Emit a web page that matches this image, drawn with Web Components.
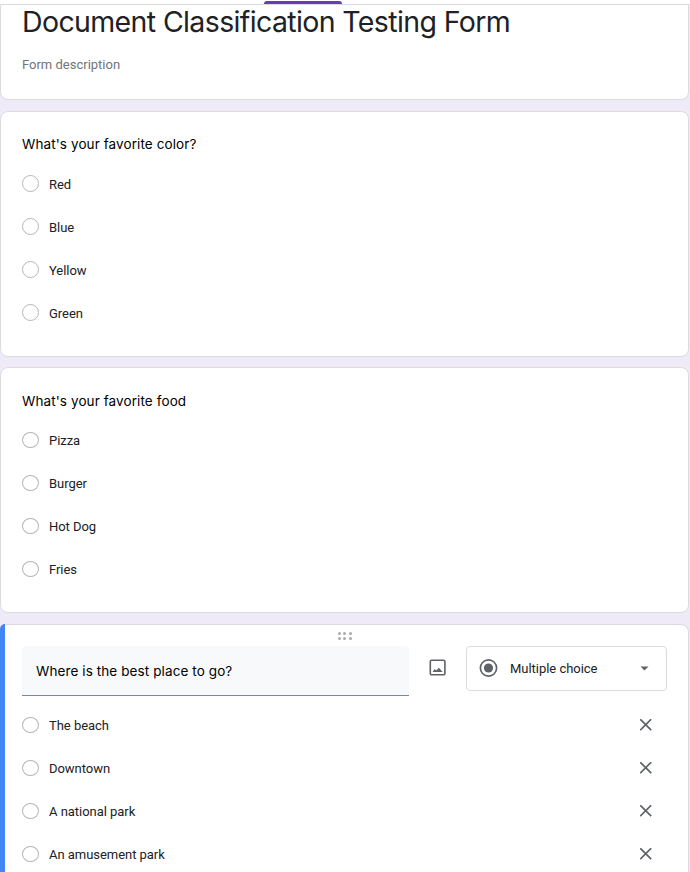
<!DOCTYPE html>
<html lang="en">
<head>
<meta charset="utf-8">
<title>Document Classification Testing Form</title>
<style>
html,body{margin:0;height:100%;overflow:hidden;background:#eeeaf7}
body{font-family:Roboto,"Liberation Sans",sans-serif;color:#202124;font-size:13px}
</style>
</head>
<body>
<form-page>
  <form-header title-text="Document Classification Testing Form">Form description</form-header>
  <form-question style="--title-top:20px;--title-gap:6px;--mb:10px;--dot-top:13px;--dot-height:17px">
    <span slot="title">What's your favorite color?</span>
    <form-option>Red</form-option><form-option>Blue</form-option><form-option>Yellow</form-option><form-option>Green</form-option>
  </form-question>
  <form-question style="--title-top:21px;--title-gap:5px;--mb:11px">
    <span slot="title">What's your favorite food</span>
    <form-option>Pizza</form-option><form-option>Burger</form-option><form-option>Hot Dog</form-option><form-option>Fries</form-option>
  </form-question>
  <form-editor>
    <span slot="title">Where is the best place to go?</span>
    <span slot="type">Multiple choice</span>
    <form-option removable>The beach</form-option><form-option removable>Downtown</form-option><form-option removable>A national park</form-option><form-option removable>An amusement park</form-option>
  </form-editor>
</form-page>
<script>
const define=(name,html,setup)=>customElements.define(name,class extends HTMLElement{
  constructor(){super();this.attachShadow({mode:'open'}).innerHTML=html}
  connectedCallback(){if(setup)setup(this)}
});
define('form-page',`<style>
:host{display:block;width:690px;height:872px;overflow:hidden}
.tabs{height:4px;background:#fff;border-bottom:1px solid #dadce0;position:relative}
.tabs i{position:absolute;left:264px;top:1px;width:78px;height:3px;background:#673ab7;border-radius:3px 3px 0 0}
</style><div class="tabs"><i></i></div><slot></slot>`);
define('form-header',`<style>
:host{display:block;box-sizing:border-box;width:689px;height:95px;margin-bottom:11px;background:#fff;border:1px solid #dadce0;border-top:0;border-radius:0 0 8px 8px;padding:0 21px}
h1{margin:0;font:400 28.5px/34px Inter,sans-serif;height:34px;letter-spacing:-.63px;white-space:nowrap}
p{margin:16px 0 0;line-height:20px;color:#70757a}
</style><h1></h1><p><slot></slot></p>`,e=>{e.shadowRoot.querySelector('h1').textContent=e.getAttribute('title-text')});
define('form-question',`<style>
:host{display:block;box-sizing:border-box;width:689px;height:246px;margin-bottom:var(--mb);background:#fff;border:1px solid #dadce0;border-radius:8px;padding:var(--title-top) 21px 0}
h2{margin:0 0 var(--title-gap);font:400 13.5px/24px Inter,sans-serif;letter-spacing:.1px;color:#000}
</style><h2><slot name="title"></slot></h2><slot></slot>`);
define('form-option',`<style>
:host{display:flex;height:43px;align-items:center;color:#202124}
i{box-sizing:border-box;align-self:flex-start;width:17px;height:var(--dot-height,16px);margin-top:var(--dot-top,14px);border:1px solid #b5b5b5;border-radius:50%;margin-right:10px}
span{flex:1;line-height:17px;padding-top:1px;letter-spacing:-.04px}
svg{display:none;width:12px;height:12px;margin-right:15px}
:host([removable]) svg{display:block}
</style><i></i><span><slot></slot></span><svg viewBox="0 0 12 12"><path d="M.2.2l11 11M11.2.2l-11 11" stroke="#5f6368" stroke-width="1.7"/></svg>`);
define('form-editor',`<style>
:host{display:block;position:relative;box-sizing:border-box;width:689px;height:260px;background:#fff;border:1px solid #dadce0;border-radius:8px;padding:0 21px}
.bar{position:absolute;left:-1px;top:-1px;bottom:0;width:5px;background:#4285f4;border-radius:8px 0 0 8px}
.grip{display:grid;grid-template-columns:repeat(3,3px);gap:2px;height:14px;padding-top:7px;justify-content:center;column-gap:2.5px;align-content:start}
.grip b{width:3px;height:3px;border-radius:50%;background:#aaa}
.row{display:flex;margin-bottom:7px;height:50px;align-items:flex-start}
.q{box-sizing:border-box;flex:none;width:387px;height:50px;background:#f8f9fb;border-bottom:1px solid #80868b;border-radius:4px 4px 0 0;padding:0 14px;font:400 13.5px/50px Inter,sans-serif;letter-spacing:.1px;color:#000}
.img{width:18px;height:18px;margin:13px 19px 0 20px}
.sel{box-sizing:border-box;flex:none;display:flex;align-items:center;width:201px;height:45px;border:1px solid #dadce0;border-radius:4px;padding:0 17px 0 12px}
.sel span{flex:1;margin-left:12px;letter-spacing:-.03px}
svg{display:block;flex:none}
</style><div class="bar"></div><div class="grip"><b></b><b></b><b></b><b></b><b></b><b></b></div>
<div class="row"><div class="q"><slot name="title"></slot></div>
<svg class="img" viewBox="0 0 18 18"><rect x="1.3" y="1.2" width="14.6" height="14.6" rx="1.4" fill="none" stroke="#5f6368" stroke-width="1.6"/><path d="M3.6 13l2-2.9 1.6 1.3 2.7-2.6 3.7 4.2z" fill="#5f6368"/></svg>
<div class="sel"><svg width="19" height="19" viewBox="0 0 19 19"><circle cx="9.5" cy="9" r="8.1" fill="none" stroke="#5f6368" stroke-width="1.7"/><circle cx="9.5" cy="9" r="4.6" fill="#5f6368"/></svg><span><slot name="type"></slot></span><svg width="9" height="5" viewBox="0 0 9 5"><path d="M.5.5h8l-4 4z" fill="#5f6368"/></svg></div></div>
<slot></slot>`);
</script>
</body>
</html>
